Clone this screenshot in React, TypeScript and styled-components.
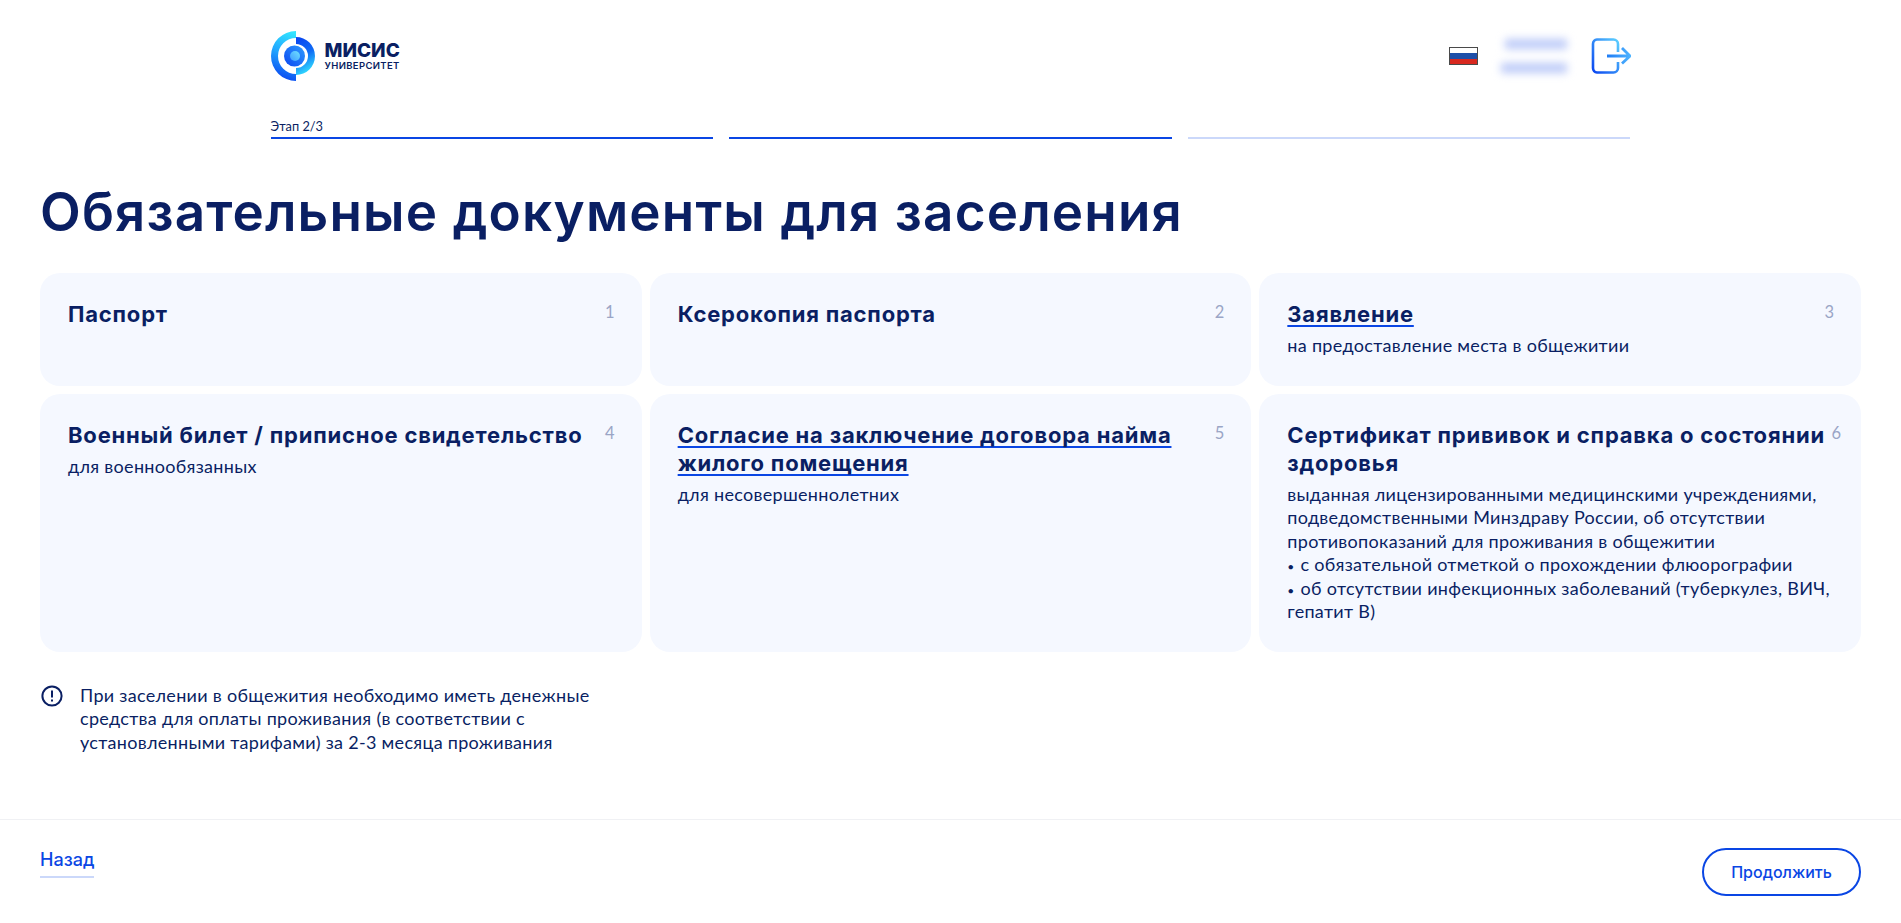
import React from 'react';
import styled, { createGlobalStyle } from 'styled-components';

const GlobalStyle = createGlobalStyle`
  html, body {
    margin: 0;
    padding: 0;
    background: #fff;
    font-family: 'Lato', 'Noto Sans', sans-serif;
    color: #0a1f63;
  }
  * { box-sizing: border-box; }
`;

const Page = styled.div`
  height: 923px;
  display: flex;
  flex-direction: column;
  overflow: hidden;
`;

const Header = styled.header`
  width: 1360px;
  margin: 0 auto;
  height: 112px;
  display: flex;
  align-items: center;
  justify-content: space-between;
`;

const LogoBox = styled.div`
  display: flex;
  align-items: center;
  gap: 8px;
`;

const LogoText = styled.div`
  display: flex;
  flex-direction: column;
  font-family: 'Inter', sans-serif;
  color: #0a1f63;
`;

const LogoTitle = styled.span`
  font-size: 19px;
  font-weight: 800;
  line-height: 19px;
`;

const LogoSub = styled.span`
  font-size: 9.5px;
  font-weight: 600;
  line-height: 12px;
  letter-spacing: 0.35px;
`;

const HeaderRight = styled.div`
  display: flex;
  align-items: center;
`;

const Flag = styled.div`
  width: 29px;
  height: 18px;
  border: 1px solid #4a4a4a;
  background: linear-gradient(#fff 0 33%, #1e4fa8 33% 66%, #d8281f 66%);
`;

const BlurNames = styled.div`
  width: 66px;
  margin-left: 23px;
  display: flex;
  flex-direction: column;
  gap: 14px;
  filter: blur(4px);
`;

const BlurBar = styled.div<{ $w: number }>`
  height: 10px;
  width: ${p => p.$w}px;
  margin-left: auto;
  background: #bccaf8;
`;

const ExitButton = styled.div`
  margin-left: 24px;
  width: 40px;
  height: 36px;
  display: flex;
`;

const Steps = styled.div`
  width: 1360px;
  margin: 0 auto;
  display: grid;
  grid-template-columns: repeat(3, 1fr);
  gap: 16px;
  height: 27px;
`;

const Step = styled.div`
  display: flex;
  flex-direction: column;
  justify-content: flex-end;
`;

const StepLabel = styled.span`
  font-size: 12.8px;
  line-height: 14px;
  margin-bottom: 4px;
  color: #0a1f63;
`;

const StepLine = styled.div<{ $active?: boolean }>`
  height: 2px;
  background: ${p => (p.$active ? '#0a46e4' : '#cbd8fa')};
`;

const Content = styled.main`
  padding: 0 40px;
  flex: 1;
`;

const Title = styled.h1`
  margin: 41px 0 0;
  font-family: 'Inter', sans-serif;
  font-size: 53px;
  line-height: 64px;
  font-weight: 600;
  letter-spacing: 1.15px;
  color: #0a1f63;
`;

const Grid = styled.div`
  margin-top: 29px;
  display: grid;
  grid-template-columns: repeat(3, 1fr);
  grid-template-rows: 113px 258px;
  gap: 8px;
`;

const Card = styled.div`
  position: relative;
  background: #f5f8ff;
  border-radius: 20px;
  padding: 27px 28px;
`;

const CardTitle = styled.div`
  font-family: 'Inter', sans-serif;
  font-size: 22px;
  line-height: 28px;
  font-weight: 700;
  letter-spacing: 0.8px;
  color: #0a1f63;
`;

const CardLink = styled.a`
  color: inherit;
  text-decoration: underline;
  text-decoration-color: #0a46e4;
  text-decoration-thickness: 2px;
  text-decoration-skip-ink: none;
  text-underline-offset: 3px;
`;

const CardText = styled.div`
  margin-top: 6px;
  font-size: 18px;
  line-height: 23.4px;
  letter-spacing: 0.3px;
  color: #0a1f63;
`;

const Bullet = styled.span`
  font-size: 12px;
  line-height: 0;
  margin-right: 1px;
`;

const CardNumber = styled.span<{ $right?: number }>`
  position: absolute;
  top: 29px;
  right: ${p => p.$right ?? 27}px;
  font-size: 16.5px;
  line-height: 20px;
  color: #9aa5c6;
`;

const Note = styled.div`
  margin-top: 32px;
  display: flex;
  gap: 16px;
  width: 600px;
  font-size: 18px;
  line-height: 23.4px;
  letter-spacing: 0.3px;
`;

const NoteIcon = styled.svg`
  flex: none;
`;

const Footer = styled.footer`
  height: 104px;
  padding: 0 40px;
  border-top: 1px solid #f0f1f4;
  display: flex;
  align-items: center;
  justify-content: space-between;
`;

const BackLink = styled.a`
  font-family: 'Inter', sans-serif;
  font-size: 18px;
  font-weight: 500;
  line-height: 24px;
  color: #0a46e4;
  padding-bottom: 4px;
  border-bottom: 2px solid #cbd8fa;
  margin-top: -17px;
`;

const NextButton = styled.button`
  width: 159px;
  height: 48px;
  background: #fff;
  border: 2px solid #0a46e4;
  border-radius: 24px;
  color: #0a46e4;
  font-family: 'Inter', sans-serif;
  font-size: 16px;
  font-weight: 500;
`;

const Logo = () => (
  <svg width="46" height="50" viewBox="0 0 46 50">
    <defs>
      <linearGradient id="lgA" x1="0.7" y1="0" x2="0.5" y2="1">
        <stop offset="0" stopColor="#33e4ff" />
        <stop offset="0.45" stopColor="#22a8ff" />
        <stop offset="1" stopColor="#0a46f0" />
      </linearGradient>
      <linearGradient id="lgB" x1="0.2" y1="0" x2="0.5" y2="1">
        <stop offset="0" stopColor="#0a46f0" />
        <stop offset="0.5" stopColor="#0f6cf5" />
        <stop offset="1" stopColor="#33e4ff" />
      </linearGradient>
      <linearGradient id="lgC" x1="0" y1="1" x2="1" y2="0">
        <stop offset="0" stopColor="#0a46f0" />
        <stop offset="1" stopColor="#2f9cff" />
      </linearGradient>
      <linearGradient id="lgD" x1="0" y1="1" x2="1" y2="0">
        <stop offset="0" stopColor="#3f9cff" />
        <stop offset="1" stopColor="#6fe0ff" />
      </linearGradient>
    </defs>
    <path d="M25 0 A25 25 0 0 0 25 50 V43 A18 18 0 0 1 25 7 Z" fill="url(#lgA)" />
    <path d="M25 6 A19 19 0 0 1 25 44 V37 A12 12 0 0 0 25 13 Z" fill="url(#lgB)" />
    <circle cx="23.5" cy="25" r="10.5" fill="url(#lgC)" />
    <circle cx="24" cy="25" r="5" fill="url(#lgD)" />
  </svg>
);

const ExitIcon = () => (
  <svg width="40" height="36" viewBox="0 0 40 36" fill="none">
    <defs>
      <linearGradient id="exA" x1="0" y1="1" x2="1" y2="0">
        <stop offset="0" stopColor="#0a46f0" />
        <stop offset="1" stopColor="#5ccfff" />
      </linearGradient>
      <linearGradient id="exB" gradientUnits="userSpaceOnUse" x1="16" y1="18" x2="40" y2="18">
        <stop offset="0" stopColor="#1f7cf5" />
        <stop offset="1" stopColor="#4fb4ff" />
      </linearGradient>
    </defs>
    <path d="M27 14 V6 A4.5 4.5 0 0 0 22.5 1.5 H6 A4.5 4.5 0 0 0 2 6 V30 A4.5 4.5 0 0 0 6 34.5 H22.5 A4.5 4.5 0 0 0 27 30 V24" stroke="url(#exA)" strokeWidth="2.6" />
    <path d="M16 18 H38 M31 10 L39 18 L31 25.5" stroke="url(#exB)" strokeWidth="2.8" />
  </svg>
);

const App = () => {
  return (
    <Page>
      <GlobalStyle />
      <Header>
        <LogoBox>
          <Logo />
          <LogoText>
            <LogoTitle>МИСИС</LogoTitle>
            <LogoSub>УНИВЕРСИТЕТ</LogoSub>
          </LogoText>
        </LogoBox>
        <HeaderRight>
          <Flag />
          <BlurNames>
            <BlurBar $w={62} />
            <BlurBar $w={66} />
          </BlurNames>
          <ExitButton>
            <ExitIcon />
          </ExitButton>
        </HeaderRight>
      </Header>
      <Steps>
        <Step>
          <StepLabel>Этап 2/3</StepLabel>
          <StepLine $active />
        </Step>
        <Step>
          <StepLine $active />
        </Step>
        <Step>
          <StepLine />
        </Step>
      </Steps>
      <Content>
        <Title>Обязательные документы для заселения</Title>
        <Grid>
          <Card>
            <CardTitle>Паспорт</CardTitle>
            <CardNumber>1</CardNumber>
          </Card>
          <Card>
            <CardTitle>Ксерокопия паспорта</CardTitle>
            <CardNumber>2</CardNumber>
          </Card>
          <Card>
            <CardTitle>
              <CardLink>Заявление</CardLink>
            </CardTitle>
            <CardText>на предоставление места в общежитии</CardText>
            <CardNumber>3</CardNumber>
          </Card>
          <Card>
            <CardTitle>Военный билет / приписное свидетельство</CardTitle>
            <CardText>для военнообязанных</CardText>
            <CardNumber>4</CardNumber>
          </Card>
          <Card>
            <CardTitle>
              <CardLink>
                Согласие на заключение договора найма
                <br />
                жилого помещения
              </CardLink>
            </CardTitle>
            <CardText>для несовершеннолетних</CardText>
            <CardNumber>5</CardNumber>
          </Card>
          <Card>
            <CardTitle>
              Сертификат прививок и справка о состоянии
              <br />
              здоровья
            </CardTitle>
            <CardText>
              выданная лицензированными медицинскими учреждениями,
              <br />
              подведомственными Минздраву России, об отсутствии
              <br />
              противопоказаний для проживания в общежитии
              <br />
              <Bullet>•</Bullet> с обязательной отметкой о прохождении флюорографии
              <br />
              <Bullet>•</Bullet> об отсутствии инфекционных заболеваний (туберкулез, ВИЧ,
              <br />
              гепатит В)
            </CardText>
            <CardNumber $right={20}>6</CardNumber>
          </Card>
        </Grid>
        <Note>
          <NoteIcon width="24" height="24" viewBox="0 0 24 24" fill="none">
            <circle cx="12" cy="12" r="9.6" stroke="#0a1f63" strokeWidth="2" />
            <path d="M12 6.5 V13.5 M12 15.5 V17.5" stroke="#0a1f63" strokeWidth="2" />
          </NoteIcon>
          <span>
            При заселении в общежития необходимо иметь денежные
            <br />
            средства для оплаты проживания (в соответствии с
            <br />
            установленными тарифами) за 2-3 месяца проживания
          </span>
        </Note>
      </Content>
      <Footer>
        <BackLink>Назад</BackLink>
        <NextButton>Продолжить</NextButton>
      </Footer>
    </Page>
  );
};

export default App;
